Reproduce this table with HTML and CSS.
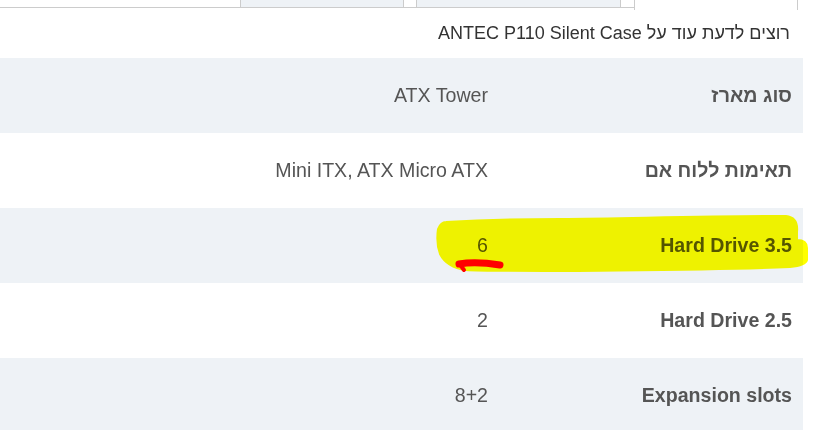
FILE: index.html
```html
<!DOCTYPE html>
<html lang="he" dir="rtl">
<head>
<meta charset="utf-8">
<title>ANTEC P110 Silent Case</title>
<link rel="stylesheet" href="styles.css">
</head>
<body>
<div class="page">
  <div class="tabs">
    <div class="tab-gap tab-gap-end"></div>
    <div class="tab tab-active"></div>
    <div class="tab-gap tab-gap-s"></div>
    <div class="tab tab-b"></div>
    <div class="tab-gap tab-gap-s2"></div>
    <div class="tab tab-a"></div>
    <div class="tab-gap tab-gap-fill"></div>
  </div>
  <div class="title">רוצים לדעת עוד על ANTEC P110 Silent Case</div>
  <div class="specs">
    <div class="row alt"><div class="label">סוג מארז</div><div class="value">ATX Tower</div></div>
    <div class="row"><div class="label">תאימות ללוח אם</div><div class="value" dir="ltr">Mini ITX, ATX Micro ATX</div></div>
    <div class="row alt"><div class="label">Hard Drive 3.5</div><div class="value">6</div></div>
    <div class="row"><div class="label">Hard Drive 2.5</div><div class="value">2</div></div>
    <div class="row alt"><div class="label">Expansion slots</div><div class="value">8+2</div></div>
  </div>
</div>
<svg class="marker" width="836" height="430" viewBox="0 0 836 430" xmlns="http://www.w3.org/2000/svg">
  <path class="hl" d="M446 222 C480 220 520 219 560 219 C640 218 720 216 786 216 C795 217 798 222 797 232 L797 240 C803 240 807 242 807 248 L807 260 C806 264 800 266 790 267 C720 270 640 270 560 271 C520 271 480 271 466 270 C452 268 444 262 440 254 C437 246 437 236 438 229 C440 224 442 222 446 222 Z"/>
</svg>
<svg class="marker marker-red" width="836" height="430" viewBox="0 0 836 430" xmlns="http://www.w3.org/2000/svg">
  <path class="red" d="M459 264 C470 262 488 263 500 265"/>
  <path class="red red-thin" d="M461 266 L464 270"/>
</svg>
</body>
</html>
```
FILE: styles.css
```css
html, body {
  margin: 0;
  padding: 0;
  background: #ffffff;
}
body {
  font-family: "Liberation Sans", Arial, sans-serif;
  width: 836px;
  height: 430px;
  overflow: hidden;
  position: relative;
}
.page {
  width: 803px;
  margin-left: 0;
  margin-right: auto;
}
.tabs {
  display: flex;
  height: 8px;
  align-items: flex-start;
}
.tab-gap {
  height: 7px;
  border-bottom: 1px solid #cccccc;
}
.tab-gap-end {
  width: 5px;
  border-bottom: none;
}
.tab-gap-s { width: 13px; }
.tab-gap-s2 { width: 12px; }
.tab-gap-fill { flex: 1; }
.tab {
  box-sizing: border-box;
  height: 8px;
  background: #eef2f6;
  border: 1px solid #cccccc;
  border-top: none;
}
.tab-a { width: 164px; }
.tab-b { width: 205px; }
.tab-active {
  width: 164px;
  height: 10px;
  background: #ffffff;
  border-bottom: none;
}
.title {
  height: 50px;
  line-height: 50px;
  padding-right: 13px;
  font-size: 18px;
  color: #333333;
  text-align: right;
}
.specs {
  display: flex;
  flex-direction: column;
}
.row {
  display: grid;
  grid-template-columns: 303px 500px;
  height: 75px;
  align-items: center;
  font-size: 19.6px;
  color: #555555;
}
.row.alt {
  background: #eef2f6;
}
.label {
  font-weight: bold;
  padding-right: 11px;
  text-align: right;
}
.value {
  padding-right: 12px;
  text-align: right;
}
.marker {
  position: absolute;
  top: 0;
  left: 0;
  pointer-events: none;
  mix-blend-mode: multiply;
}
.marker-red {
  mix-blend-mode: normal;
}
.hl {
  fill: #ffff00;
  stroke: #ffff00;
  stroke-width: 2;
  stroke-linejoin: round;
}
.red {
  fill: none;
  stroke: #ff0000;
  stroke-width: 7;
  stroke-linecap: round;
}
.red-thin {
  stroke-width: 4;
}
```
